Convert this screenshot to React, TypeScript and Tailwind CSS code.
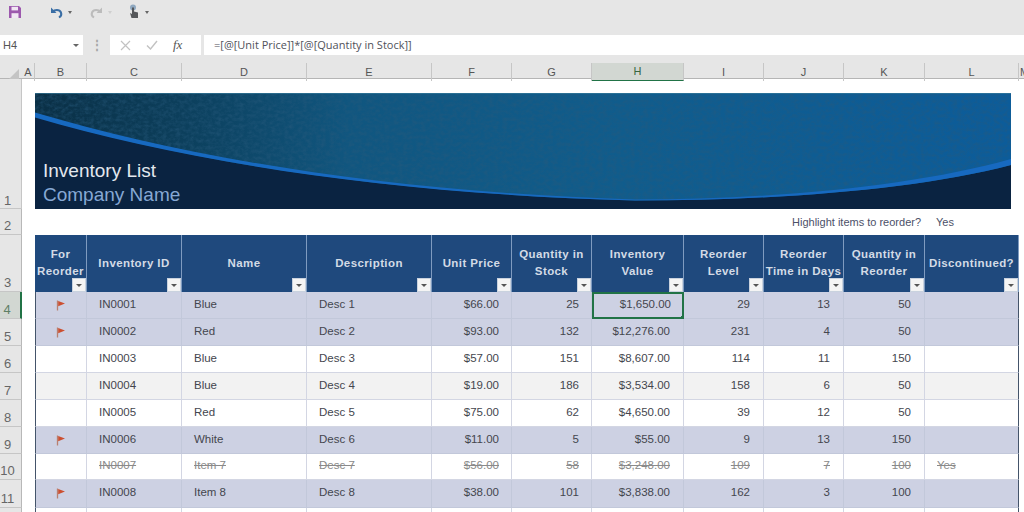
import React from "react";

const cols = ["A", "B", "C", "D", "E", "F", "G", "H", "I", "J", "K", "L", "M"];

const sheetGrid = "grid grid-cols-[22px_13px_52px_95px_125px_125px_80px_80px_92px_80px_80px_81px_94px_1fr]";

const headers = [
  { label: "For Reorder", cls: "w-[48px]" },
  { label: "Inventory ID", cls: "" },
  { label: "Name", cls: "" },
  { label: "Description", cls: "" },
  { label: "Unit Price", cls: "" },
  { label: "Quantity in Stock", cls: "w-[70px]" },
  { label: "Inventory Value", cls: "w-[70px]" },
  { label: "Reorder Level", cls: "w-[60px]" },
  { label: "Reorder Time in Days", cls: "w-[76px]" },
  { label: "Quantity in Reorder", cls: "w-[72px]" },
  { label: "Discontinued?", cls: "" },
];

const rows = [
  { n: 4, h: "h-[27px]", kind: "flag", v: ["IN0001", "Blue", "Desc 1", "$66.00", "25", "$1,650.00", "29", "13", "50", ""] },
  { n: 5, h: "h-[27px]", kind: "flag", v: ["IN0002", "Red", "Desc 2", "$93.00", "132", "$12,276.00", "231", "4", "50", ""] },
  { n: 6, h: "h-[27px]", kind: "plain", v: ["IN0003", "Blue", "Desc 3", "$57.00", "151", "$8,607.00", "114", "11", "150", ""] },
  { n: 7, h: "h-[27px]", kind: "grey", v: ["IN0004", "Blue", "Desc 4", "$19.00", "186", "$3,534.00", "158", "6", "50", ""] },
  { n: 8, h: "h-[27px]", kind: "plain", v: ["IN0005", "Red", "Desc 5", "$75.00", "62", "$4,650.00", "39", "12", "50", ""] },
  { n: 9, h: "h-[27px]", kind: "flag", v: ["IN0006", "White", "Desc 6", "$11.00", "5", "$55.00", "9", "13", "150", ""] },
  { n: 10, h: "h-[26px]", kind: "gone", v: ["IN0007", "Item 7", "Desc 7", "$56.00", "58", "$3,248.00", "109", "7", "100", "Yes"] },
  { n: 11, h: "h-[28px]", kind: "flag", v: ["IN0008", "Item 8", "Desc 8", "$38.00", "101", "$3,838.00", "162", "3", "100", ""] },
];

function RowNum({ n, active }: { n: number; active?: boolean }) {
  return (
    <div
      className={
        "flex items-end justify-center pb-[1px] pr-[6px] border-b border-[#c6c6c6] border-r text-[13px] leading-[14px] " +
        (active ? "bg-[#d2d7d2] border-r-[#217346] border-r-2 text-[#5f7f66]" : "bg-[#e6e6e6] border-r-[#b8b8b8] text-[#666]")
      }
    >
      {n}
    </div>
  );
}

function Flag() {
  return (
    <svg width="10" height="11" viewBox="0 0 10 11">
      <path d="M1.5 0.5V10.5" stroke="#b9806f" strokeWidth="1.3" />
      <path d="M2.2 1L9 3.6L2.2 6.2Z" fill="#cc4f30" />
    </svg>
  );
}

function Filter() {
  return (
    <div className="absolute right-0 bottom-0 w-[14px] h-[14px] bg-[#f4f4f4] border border-[#c9d2de] flex items-center justify-center">
      <div className="w-0 h-0 border-l-[3px] border-r-[3px] border-t-[3px] border-l-transparent border-r-transparent border-t-[#555]" />
    </div>
  );
}

function Caret({ light }: { light?: boolean }) {
  return (
    <div
      className={
        "ml-[4px] mt-[1px] w-0 h-0 border-l-[2.5px] border-r-[2.5px] border-t-[3px] border-l-transparent border-r-transparent " +
        (light ? "border-t-[#cfcfcf]" : "border-t-[#666]")
      }
    />
  );
}

function Banner() {
  return (
    <div className="relative h-[116px] overflow-hidden bg-[#0b2542]">
      <svg className="block" width="976" height="116" viewBox="0 0 976 116">
        <defs>
          <linearGradient id="sky" x1="0" y1="0" x2="1" y2="0">
            <stop offset="0" stopColor="#0a2f45" />
            <stop offset="0.15" stopColor="#0c3f5c" />
            <stop offset="0.32" stopColor="#10567f" />
            <stop offset="0.6" stopColor="#105c8c" />
            <stop offset="1" stopColor="#0c5c9a" />
          </linearGradient>
          <filter id="grain" x="0" y="0" width="100%" height="100%">
            <feTurbulence type="fractalNoise" baseFrequency="0.22 0.28" numOctaves="4" seed="11" />
            <feColorMatrix values="0 0 0 0 0.02  0 0 0 0 0.1  0 0 0 0 0.2  1 0 0 0 -0.36" />
          </filter>
        </defs>
        <rect width="976" height="116" fill="url(#sky)" />
        <rect width="976" height="116" filter="url(#grain)" />
        <rect width="976" height="1" fill="#3a7f9f" opacity="0.6" />
        <path d="M0 24C150 68 350 101 600 107.5C740 107.5 880 97 976 72V116H0Z" fill="#0a2341" />
        <path
          d="M0 19.5C150 64 350 99 600 106.5C740 106.5 880 93 976 66V72C880 97 740 107.5 600 107.5C350 101 150 68 0 24.5Z"
          fill="#1769c0"
        />
      </svg>
      <div className="absolute left-[8px] bottom-[2px] text-[19px] leading-[24px]">
        <div className="text-[#e3e8ee]">Inventory List</div>
        <div className="text-[#86a8d4]">Company Name</div>
      </div>
    </div>
  );
}

export default function App() {
  return (
    <div className="w-[1024px] h-[512px] overflow-hidden bg-white font-['Liberation_Sans',sans-serif] text-[#44464e]">
      {/* quick access */}
      <div className="h-[35px] bg-[#e6e6e6] flex items-center pb-[12px] pl-[8px]">
        <svg width="14" height="14" viewBox="0 0 14 14" fill="none">
          <path d="M1 1H11L13 3V13H1Z" fill="#9c58ad" />
          <rect x="3.5" y="1.8" width="6.5" height="3.6" fill="#f0e6f3" />
          <rect x="3.5" y="8.2" width="7" height="4.8" fill="#f0e6f3" />
        </svg>
        <svg className="ml-[27px]" width="15" height="14" viewBox="0 0 15 14" fill="none">
          <path d="M2 2.5V8H7.5Z" fill="#3a6ea5" />
          <path d="M3.5 7C5.5 4.4 10.5 4 12 7.5C12.8 9.6 11.6 11.5 10 12.5" stroke="#3a6ea5" strokeWidth="2" />
        </svg>
        <Caret />
        <svg className="ml-[17px]" width="15" height="14" viewBox="0 0 15 14" fill="none">
          <path d="M13 2.5V8H7.5Z" fill="#bcbcbc" />
          <path d="M11.5 7C9.5 4.4 4.5 4 3 7.5C2.2 9.6 3.4 11.5 5 12.5" stroke="#bcbcbc" strokeWidth="2" />
        </svg>
        <Caret light />
        <svg className="ml-[15px]" width="14" height="16" viewBox="0 0 14 16" fill="none">
          <circle cx="6" cy="3.5" r="3" fill="#8fa8c0" />
          <path d="M5 3.5V10L3 9L4.5 14H11V8.5L7 7.5V3.5Z" fill="#55575a" />
        </svg>
        <Caret />
      </div>

      {/* formula bar */}
      <div className="h-[28px] bg-[#e6e6e6] flex pb-[8px] text-[11px]">
        <div className="w-[83px] bg-white flex items-center justify-between pl-[3px] pr-[4px] text-[#555]">
          <span>H4</span>
          <div className="w-0 h-0 border-l-[3px] border-r-[3px] border-t-[3px] border-l-transparent border-r-transparent border-t-[#666]" />
        </div>
        <div className="w-[27px] flex items-center justify-center text-[#a5a5a5] text-[12px] font-bold">⋮</div>
        <div className="w-[91px] bg-white flex items-center pl-[10px] text-[#bbb]">
          <svg width="11" height="11" viewBox="0 0 11 11" fill="none" stroke="#c2c2c2" strokeWidth="1.2">
            <path d="M1 1L10 10M10 1L1 10" />
          </svg>
          <svg className="ml-[15px]" width="12" height="10" viewBox="0 0 12 10" fill="none" stroke="#c2c2c2" strokeWidth="1.4">
            <path d="M1 5.5L4.5 9L11 1" />
          </svg>
          <span className="ml-[15px] font-['Liberation_Serif',serif] italic text-[13px] text-[#555]">fx</span>
        </div>
        <div className="ml-[3px] flex-1 bg-white flex items-center pl-[10px] font-['Open_Sans',sans-serif] text-[11px] text-[#50525a]">
          =[@[Unit Price]]*[@[Quantity in Stock]]
        </div>
      </div>

      {/* column letters */}
      <div className={sheetGrid + " h-[16px] bg-[#e6e6e6] border-b border-[#b5b5b5] text-[11px] text-[#555]"}>
        <div className="flex items-end justify-end pr-[3px] pb-[1px]">
          <svg width="11" height="11" viewBox="0 0 11 11">
            <path d="M11 0V11H0Z" fill="#c4c4c4" />
          </svg>
        </div>
        {cols.map((c) => (
          <div
            key={c}
            className={
              "flex items-center border-r border-[#c6c6c6] " +
              (c === "M" ? "pl-[1px] " : "justify-center ") +
              (c === "H" ? "bg-[#d2d7d2] border-b border-b-[#217346] text-[#37663f]" : "")
            }
          >
            {c}
          </div>
        ))}
      </div>

      {/* banner row */}
      <div className={sheetGrid}>
        <div className="h-[130px] flex items-end justify-center pr-[6px] bg-[#e6e6e6] border-r border-b border-[#c6c6c6] text-[13px] leading-[14px] text-[#666]">1</div>
        <div />
        <div className="col-span-11 pt-[14px]">
          <div className="w-[976px]">
            <Banner />
          </div>
        </div>
      </div>

      {/* highlight row */}
      <div className={sheetGrid + " h-[26px]"}>
        <RowNum n={2} />
        <div className="col-span-12 flex items-center justify-end pr-[65px] text-[11px]">
          <span className="text-[#4c5068]">Highlight items to reorder?</span>
          <span className="ml-[15px] text-[#4c5068]">Yes</span>
        </div>
      </div>

      {/* table header */}
      <div className={sheetGrid + " h-[57px]"}>
        <RowNum n={3} />
        <div />
        {headers.map((h) => (
          <div
            key={h.label}
            className="relative flex items-center justify-center bg-[#1f497d] border-r border-[#7f9bc0] text-center font-bold text-[11.5px] leading-[17px] tracking-[0.4px] text-[#d3dbe6]"
          >
            <div className={h.cls + " -mt-[1px]"}>{h.label}</div>
            <Filter />
          </div>
        ))}
      </div>

      {/* table body */}
      {rows.map((r) => {
        const gone = r.kind === "gone";
        const bg = r.kind === "flag" ? "bg-[#cdd1e3]" : r.kind === "grey" ? "bg-[#f2f2f2]" : "bg-white";
        const line = r.kind === "flag" ? "border-[#c2c8da]" : "border-[#d3d6e3]";
        return (
          <div key={r.n} className={sheetGrid + " " + r.h}>
            <RowNum n={r.n} active={r.n === 4} />
            <div />
            <div className={"flex items-center justify-center border-l border-l-[#44546a] border-r border-b " + bg + " " + line}>
              {r.kind === "flag" && <Flag />}
            </div>
            {r.v.map((val, i) => {
              const left = i < 3 || i === 9;
              const selected = r.n === 4 && i === 5;
              return (
                <div
                  key={i}
                  className={
                    "relative flex items-center text-[11.5px] pb-[1px] " +
                    bg + " " +
                    (selected ? "border-2 border-[#217346] pr-[11px] justify-end " : "border-r border-b " + line + " ") +
                    (left ? "pl-[12px] " : selected ? "" : i >= 5 ? "justify-end pr-[13px] " : "justify-end pr-[12px] ") +
                    (gone ? "line-through text-[#8a8a8a] " : "") +
                    (i === 9 ? "border-r-[#44546a] " : "")
                  }
                >
                  {val}
                  {selected && <div className="absolute right-[-3px] bottom-[-3px] w-[4px] h-[4px] bg-[#217346]" />}
                </div>
              );
            })}
          </div>
        );
      })}
      {/* row 12, cut off */}
      <div className={sheetGrid + " h-[4px]"}>
        <div className="bg-[#e6e6e6] border-r border-[#b8b8b8]" />
        <div />
        <div className="border-l border-[#44546a] border-r border-r-[#d3d6e3]" />
        {Array.from({ length: 10 }).map((_, i) => (
          <div key={i} className={"border-r " + (i === 9 ? "border-[#44546a]" : "border-[#d3d6e3]")} />
        ))}
      </div>
    </div>
  );
}
